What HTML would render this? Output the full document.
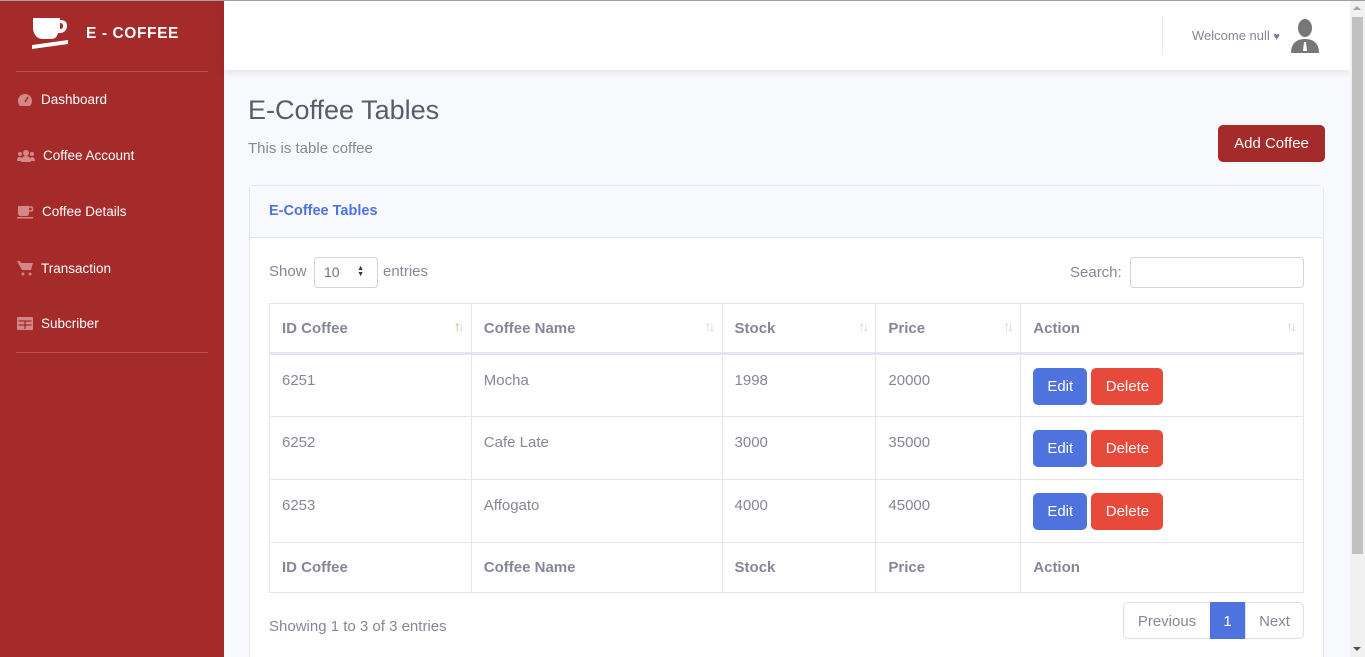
<!DOCTYPE html>
<html><head><meta charset="utf-8"><style>
*{box-sizing:border-box;margin:0;padding:0}
html{width:1365px;height:657px;overflow:hidden}
body{width:1365px;height:657px;overflow:hidden;font-family:"Liberation Sans",sans-serif;background:#f8f9fc;color:#858796;position:relative}
.topline{position:absolute;left:0;top:0;width:1365px;height:1px;background:#a0a0a0;z-index:5}
.side{position:absolute;left:0;top:0;width:224px;height:657px;background:#a52a2a}
.brand{position:absolute;left:30px;top:16px;display:flex;align-items:center;color:#fff;font-weight:bold;font-size:15.5px;letter-spacing:.6px}
.hr{position:absolute;left:16px;width:192px;height:1px;background:rgba(255,255,255,.2)}
.nav{position:absolute;left:17px;color:#fff;font-size:13.5px;display:flex;align-items:center}
.nav svg{margin-right:8px}
.top{position:absolute;left:224px;top:0;width:1126px;height:70px;background:#fff;box-shadow:0 2px 8px rgba(58,59,69,.12)}
.sb{position:absolute;left:1350px;top:0;width:15px;height:657px;background:#f1f1f1}
.thumb{position:absolute;left:1352px;top:17px;width:11px;height:537px;background:#c1c1c1}
h1{position:absolute;left:248px;top:95px;font-weight:400;font-size:27px;color:#5a5c69}
.sub{position:absolute;left:248px;top:140px;font-size:15px}
.add{position:absolute;left:1218px;top:125px;width:107px;height:37px;background:#a52a2a;color:#fff;border-radius:5px;font-size:15px;text-align:center;line-height:37px}
.card{position:absolute;left:249px;top:185px;width:1075px;height:480px;background:#fff;border:1px solid #e3e6f0;border-radius:5px}
.ch{height:52px;background:#f8f9fc;border-bottom:1px solid #e3e6f0;padding:17px 19px;color:#4e73df;font-weight:bold;font-size:14.5px}
.abs{position:absolute}
table{position:absolute;left:269px;top:303px;width:1035px;border-collapse:collapse;font-size:15px}
td,th{border:1px solid #e3e6f0;text-align:left;padding:0 12px;position:relative}
th{font-weight:bold;color:#858796;height:50px}
thead th{border-bottom:3px solid #e3e6f0}
tbody td{height:63px;vertical-align:top;padding-top:17px}
.ar{position:absolute;right:9px;top:14px;font-size:14px;color:#d1d3e2;letter-spacing:-3px;font-weight:normal}
.btn{display:inline-block;height:37px;line-height:37px;color:#fff;border-radius:5px;font-size:15px;text-align:center;margin-top:-4px}
.pg{position:absolute;top:602px;height:37px;line-height:37px;font-size:15px;border:1px solid #dddfeb;text-align:center}
</style></head><body>
<div class="topline"></div>
<div class="side">
 <div class="brand"><svg width="40" height="36" viewBox="0 0 40 36"><path d="M3 2h27v2c5 0 7 2 7 6s-3 7-7 7h-2c-1 4-3 6-7 6h-8c-6 0-9-4-10-10z" fill="#fff"/><path d="M30 7c2 0 3 1 3 3s-1 3-3 3z" fill="#a52a2a"/><path d="M2 29l36-5v4l-36 5z" fill="#fff"/></svg><span style="margin-left:16px">E - COFFEE</span></div>
 <div class="hr" style="top:71px"></div>
 <div class="nav" style="top:92px"><svg width="16" height="14" viewBox="0 0 16 14"><path d="M8 1a7 7 0 0 0-7 7c0 2 1 4 2 5h10c1-1 2-3 2-5a7 7 0 0 0-7-7z" fill="#d58787"/><path d="M8 9l3-5" stroke="#a52a2a" stroke-width="1.5"/></svg>Dashboard</div>
 <div class="nav" style="top:148px"><svg width="18" height="12" viewBox="0 0 18 12"><circle cx="9" cy="3" r="3" fill="#d58787"/><circle cx="3" cy="4" r="2" fill="#d58787"/><circle cx="15" cy="4" r="2" fill="#d58787"/><path d="M4 12c0-4 2-6 5-6s5 2 5 6zM0 11c0-3 1-4 3-4s2 1 2 4zM13 11c0-3 1-4 2-4s3 1 3 4z" fill="#d58787"/></svg>Coffee Account</div>
 <div class="nav" style="top:204px"><svg width="17" height="14" viewBox="0 0 17 14"><path d="M1 1h11v7c0 2-1 3-3 3H4c-2 0-3-1-3-3z" fill="#d58787"/><path d="M12 2h2c2 0 2 4 0 4h-2" stroke="#d58787" stroke-width="1.5" fill="none"/><rect x="0" y="12" width="16" height="1.5" fill="#d58787"/></svg>Coffee Details</div>
 <div class="nav" style="top:260px"><svg width="16" height="16" viewBox="0 0 16 16"><path d="M0 1h3l1 2h12l-2 7H5z" fill="#d58787"/><circle cx="6" cy="14" r="1.5" fill="#d58787"/><circle cx="13" cy="14" r="1.5" fill="#d58787"/></svg>Transaction</div>
 <div class="nav" style="top:316px"><svg width="16" height="13" viewBox="0 0 16 13"><rect x="0" y="0" width="16" height="13" rx="1" fill="#d58787"/><path d="M1.5 4h13M8 4v8M1.5 8h13" stroke="#a52a2a" stroke-width="1.3"/></svg>Subcriber</div>
 <div class="hr" style="top:352px"></div>
</div>
<div class="top">
 <div class="abs" style="left:938px;top:16px;width:1px;height:39px;background:#e3e6f0"></div>
 <div class="abs" style="left:968px;top:28px;font-size:13px;color:#858796">Welcome null <span style="font-size:11px;color:#7a7f9e">♥</span></div>
 <svg class="abs" style="left:1066px;top:18px" width="30" height="36" viewBox="0 0 30 36"><ellipse cx="15" cy="10" rx="7" ry="9" fill="#777"/><path d="M1 35c0-10 6-14 14-14s14 4 14 14z" fill="#777"/><path d="M14 24h2l1 9h-4z" fill="#fff"/></svg>
</div>
<div class="sb"></div><div class="thumb"></div>
<div class="abs" style="left:1353px;top:6px;border:4px solid transparent;border-bottom:4px solid #a3a3a3;border-top:0"></div>
<div class="abs" style="left:1353px;top:647px;border:4px solid transparent;border-top:4px solid #505050;border-bottom:0"></div>
<h1>E-Coffee Tables</h1>
<div class="sub">This is table coffee</div>
<div class="add">Add Coffee</div>
<div class="card"><div class="ch">E-Coffee Tables</div></div>
<div class="abs" style="left:269px;top:263px;font-size:15px">Show</div>
<div class="abs" style="left:314px;top:257px;width:64px;height:31px;border:1px solid #d1d3e2;border-radius:4px;font-size:14px;color:#6e707e;padding:6px 9px">10<span style="position:absolute;right:13px;top:8px;font-size:7px;line-height:6px;color:#333">▲<br>▼</span></div>
<div class="abs" style="left:383px;top:263px;font-size:15px">entries</div>
<div class="abs" style="left:1070px;top:264px;font-size:15px">Search:</div>
<div class="abs" style="left:1130px;top:257px;width:174px;height:31px;border:1px solid #d1d3e2;border-radius:4px"></div>
<table>
<colgroup><col style="width:202px"><col style="width:251px"><col style="width:154px"><col style="width:145px"><col style="width:283px"></colgroup>
<thead><tr><th>ID Coffee<span class="ar"><span style="color:#e0a060">↑</span>↓</span></th><th>Coffee Name<span class="ar">↑↓</span></th><th>Stock<span class="ar">↑↓</span></th><th>Price<span class="ar">↑↓</span></th><th>Action<span class="ar">↑↓</span></th></tr></thead>
<tbody>
<tr><td>6251</td><td>Mocha</td><td>1998</td><td>20000</td><td><span class="btn" style="background:#4e73df;width:54px">Edit</span> <span class="btn" style="background:#e74a3b;width:72px">Delete</span></td></tr>
<tr><td>6252</td><td>Cafe Late</td><td>3000</td><td>35000</td><td><span class="btn" style="background:#4e73df;width:54px">Edit</span> <span class="btn" style="background:#e74a3b;width:72px">Delete</span></td></tr>
<tr><td>6253</td><td>Affogato</td><td>4000</td><td>45000</td><td><span class="btn" style="background:#4e73df;width:54px">Edit</span> <span class="btn" style="background:#e74a3b;width:72px">Delete</span></td></tr>
</tbody>
<tfoot><tr><th>ID Coffee</th><th>Coffee Name</th><th>Stock</th><th>Price</th><th>Action</th></tr></tfoot>
</table>
<div class="abs" style="left:269px;top:618px;font-size:15px">Showing 1 to 3 of 3 entries</div>
<div class="pg" style="left:1123px;width:88px;border-radius:5px 0 0 5px">Previous</div>
<div class="pg" style="left:1210px;width:35px;background:#4e73df;border-color:#4e73df;color:#fff">1</div>
<div class="pg" style="left:1245px;width:59px;border-radius:0 5px 5px 0">Next</div>
</body></html>
